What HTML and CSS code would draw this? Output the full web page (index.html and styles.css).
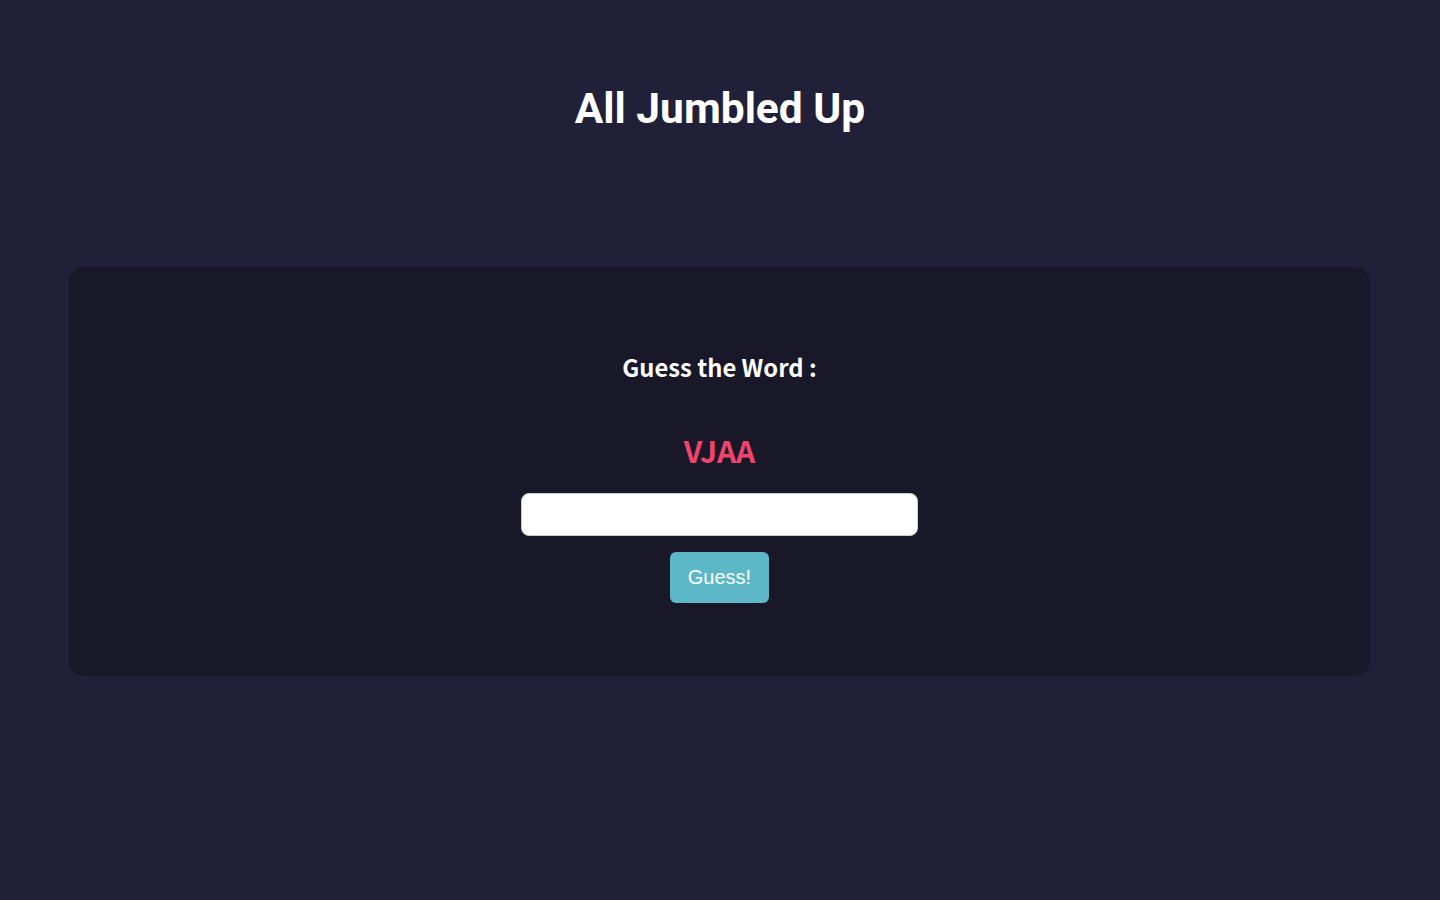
FILE: index.html
```html
<!DOCTYPE html>
<html>
<head>
<meta charset="utf-8">
<link rel="stylesheet" href="styles.css">
</head>
<body>
<header class="header"><h1 class="title">All Jumbled Up</h1></header>
<main class="card">
  <h2 class="prompt">Guess the Word :</h2>
  <p class="word">VJAA</p>
  <input class="answer" type="text">
  <button class="guess-btn">Guess!</button>
</main>
</body>
</html>
```
FILE: styles.css
```css
html, body { margin: 0; padding: 0; }
body {
  background: #202038;
  width: 1440px;
  height: 900px;
  overflow: hidden;
  font-family: "Noto Sans CJK JP", sans-serif;
  color: #fff;
  display: flex;
  flex-direction: column;
  align-items: center;
}
.header { padding-top: 80px; height: 267px; box-sizing: border-box; }
.title {
  margin: 0;
  font-family: Roboto, sans-serif;
  font-weight: 700;
  font-size: 42.5px;
  line-height: 58px;
}
.card {
  width: 1301px;
  height: 409px;
  box-sizing: border-box;
  background: #181828;
  border-radius: 15px;
  display: flex;
  flex-direction: column;
  align-items: center;
  padding-top: 80px;
  margin-left: -1px;
}
.prompt {
  margin: 0;
  font-size: 23.75px;
  font-weight: 700;
  line-height: 40px;
}
.word {
  margin: 43px 0 0;
  font-size: 30px;
  font-weight: 600;
  color: #f0446c;
  line-height: 40px;
}
.answer {
  margin-top: 23px;
  width: 397px;
  height: 43px;
  box-sizing: border-box;
  border: 1px solid #ccc;
  border-radius: 8px;
  background: #fff;
  outline: none;
}
.guess-btn {
  margin-top: 16px;
  width: 99px;
  height: 51px;
  border: none;
  border-radius: 6px;
  background: #5cb8c6;
  color: #fff;
  font-family: "Liberation Sans", Arial, sans-serif;
  font-size: 20px;
}
```
